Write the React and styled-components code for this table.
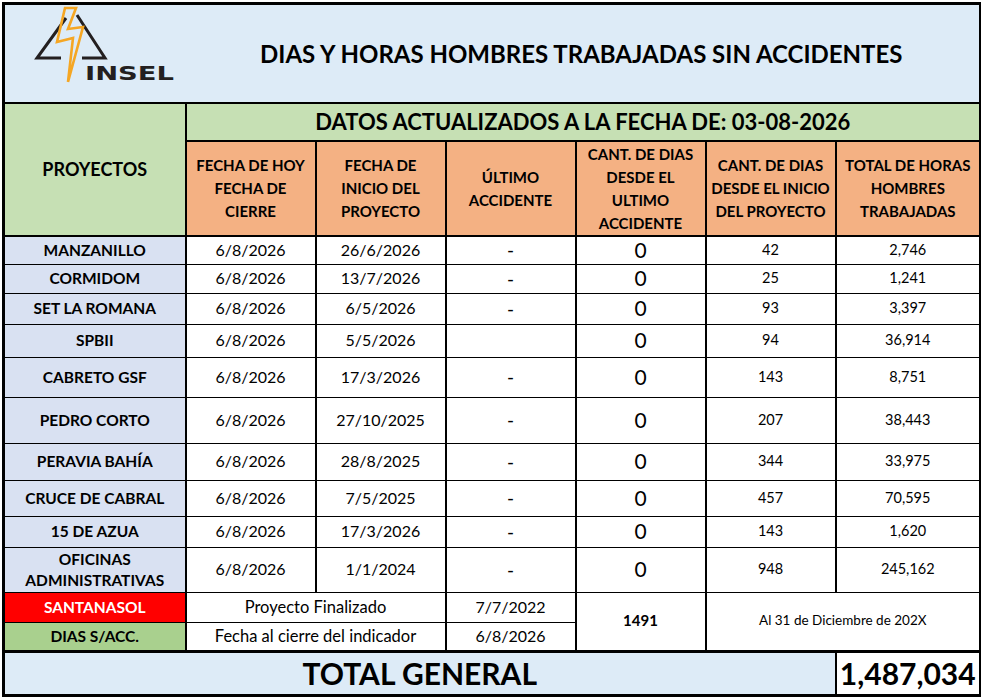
import React from 'react';
import styled, { createGlobalStyle } from 'styled-components';

const Global = createGlobalStyle`
  body {
    margin: 0;
    background: #fff;
    font-family: Lato, "Open Sans", sans-serif;
    color: #000;
  }
`;

const Page = styled.div`
  padding: 2px;
`;

const Sheet = styled.table`
  width: 977px;
  border-collapse: collapse;
  table-layout: fixed;
  border: 3px solid #000;
`;

const Row = styled.tr`
  height: ${props => props.$h}px;
`;

const Cell = styled.td`
  border-top: 1px solid #000;
  border-bottom: 1px solid #000;
  border-left: 2px solid #000;
  border-right: 2px solid #000;
  padding: 0 2px;
  text-align: center;
  vertical-align: middle;
  background: ${props => props.$bg || '#fff'};
  color: ${props => props.$color || '#000'};
  font-size: ${props => props.$size || 16}px;
  font-weight: ${props => (props.$bold ? 700 : 400)};
  line-height: 1.15;
  white-space: nowrap;
`;

const LogoCell = styled.td`
  background: #ddebf7;
  border-bottom: 2px solid #000;
  border-right: none;
  padding: 0;
`;

const TitleCell = styled.td`
  background: #ddebf7;
  border-bottom: 2px solid #000;
  border-left: none;
  text-align: center;
  font-size: 24px;
  font-weight: 700;
  padding: 0 2px 0 0;
`;

const Banner = styled(Cell)`
  background: #c6e0b4;
  font-size: 22px;
  font-weight: 700;
  border-top: 2px solid #000;
  border-bottom: 2px solid #000;
`;

const Head = styled(Cell)`
  background: ${props => props.$bg || '#f4b183'};
  font-size: ${props => props.$size || 15}px;
  font-weight: 700;
  line-height: 23px;
  white-space: normal;
  padding: 0 1px;
  border-top: 2px solid #000;
  border-bottom: 2px solid #000;
`;

const Project = styled(Cell)`
  background: ${props => props.$bg || '#d9e1f2'};
  color: ${props => props.$color || '#000'};
  font-size: 15.5px;
  font-weight: 700;
  line-height: 21px;
  white-space: normal;
  padding: 0;
`;

const Total = styled(Cell)`
  background: ${props => props.$bg || '#ddebf7'};
  font-size: 30px;
  font-weight: 700;
  border-top: 3px solid #000;
  border-bottom: 3px solid #000;
`;

const LogoSvg = styled.svg`
  display: block;
`;

const Logo = () => (
  <LogoSvg width="182" height="97" viewBox="0 0 182 97">
    <g fill="none" stroke="#231f20" strokeWidth="3" strokeLinejoin="miter">
      <polyline points="56,53 32,53 61,13" />
      <polyline points="72,10 100,53 77,53" />
    </g>
    <polygon
      points="60,3 71,3 63,24 78,22 63,77 68,33 52,37"
      fill="none"
      stroke="#f5a623"
      strokeWidth="2.6"
      strokeLinejoin="miter"
    />
    <text
      x="80"
      y="75"
      textLength="89"
      lengthAdjust="spacingAndGlyphs"
      fontFamily="'DejaVu Sans', sans-serif"
      fontWeight="700"
      fontSize="20"
      fill="#231f20"
    >
      INSEL
    </text>
  </LogoSvg>
);

const projects = [
  { name: 'MANZANILLO', start: '26/6/2026', last: '-', days: 42, hours: '2,746', h: 28 },
  { name: 'CORMIDOM', start: '13/7/2026', last: '-', days: 25, hours: '1,241', h: 29 },
  { name: 'SET LA ROMANA', start: '6/5/2026', last: '-', days: 93, hours: '3,397', h: 31 },
  { name: 'SPBII', start: '5/5/2026', last: '', days: 94, hours: '36,914', h: 33 },
  { name: 'CABRETO GSF', start: '17/3/2026', last: '-', days: 143, hours: '8,751', h: 40 },
  { name: 'PEDRO CORTO', start: '27/10/2025', last: '-', days: 207, hours: '38,443', h: 46 },
  { name: 'PERAVIA BAHÍA', start: '28/8/2025', last: '-', days: 344, hours: '33,975', h: 37 },
  { name: 'CRUCE DE CABRAL', start: '7/5/2025', last: '-', days: 457, hours: '70,595', h: 36 },
  { name: '15 DE AZUA', start: '17/3/2026', last: '-', days: 143, hours: '1,620', h: 31 },
  { name: 'OFICINAS ADMINISTRATIVAS', start: '1/1/2024', last: '-', days: 948, hours: '245,162', h: 45 }
];

const App = () => (
  <Page>
    <Global />
    <Sheet>
      <colgroup>
        <col style={{ width: 182 }} />
        <col style={{ width: 130 }} />
        <col style={{ width: 130 }} />
        <col style={{ width: 130 }} />
        <col style={{ width: 130 }} />
        <col style={{ width: 130 }} />
        <col style={{ width: 145 }} />
      </colgroup>
      <tbody>
        <Row $h={98}>
          <LogoCell>
            <Logo />
          </LogoCell>
          <TitleCell colSpan={6}>DIAS Y HORAS HOMBRES TRABAJADAS SIN ACCIDENTES</TitleCell>
        </Row>
        <Row $h={38}>
          <Head rowSpan={2} $bg="#c6e0b4" $size={18}>PROYECTOS</Head>
          <Banner colSpan={6}>DATOS ACTUALIZADOS A LA FECHA DE: 03-08-2026</Banner>
        </Row>
        <Row $h={95}>
          <Head>FECHA DE HOY<br />FECHA DE<br />CIERRE</Head>
          <Head>FECHA DE<br />INICIO DEL<br />PROYECTO</Head>
          <Head>ÚLTIMO<br />ACCIDENTE</Head>
          <Head>CANT. DE DIAS<br />DESDE EL<br />ULTIMO<br />ACCIDENTE</Head>
          <Head>CANT. DE DIAS<br />DESDE EL INICIO<br />DEL PROYECTO</Head>
          <Head>TOTAL DE HORAS<br />HOMBRES<br />TRABAJADAS</Head>
        </Row>
        {projects.map(p => (
          <Row key={p.name} $h={p.h}>
            <Project>{p.name}</Project>
            <Cell>6/8/2026</Cell>
            <Cell>{p.start}</Cell>
            <Cell $size={19}>{p.last}</Cell>
            <Cell $size={21}>0</Cell>
            <Cell $size={14.5}>{p.days}</Cell>
            <Cell $size={14.5}>{p.hours}</Cell>
          </Row>
        ))}
        <Row $h={30}>
          <Project $bg="#ff0000" $color="#fff">SANTANASOL</Project>
          <Cell colSpan={2} $size={16.5}>Proyecto Finalizado</Cell>
          <Cell>7/7/2022</Cell>
          <Cell rowSpan={2} $size={15} $bold>1491</Cell>
          <Cell colSpan={2} rowSpan={2} $size={13.5}>Al 31 de Diciembre de 202X</Cell>
        </Row>
        <Row $h={29}>
          <Project $bg="#a9d08e">DIAS S/ACC.</Project>
          <Cell colSpan={2} $size={16.5}>Fecha al cierre del indicador</Cell>
          <Cell>6/8/2026</Cell>
        </Row>
        <Row $h={44}>
          <Total colSpan={6}>TOTAL GENERAL</Total>
          <Total $bg="#fff">1,487,034</Total>
        </Row>
      </tbody>
    </Sheet>
  </Page>
);

export default App;
